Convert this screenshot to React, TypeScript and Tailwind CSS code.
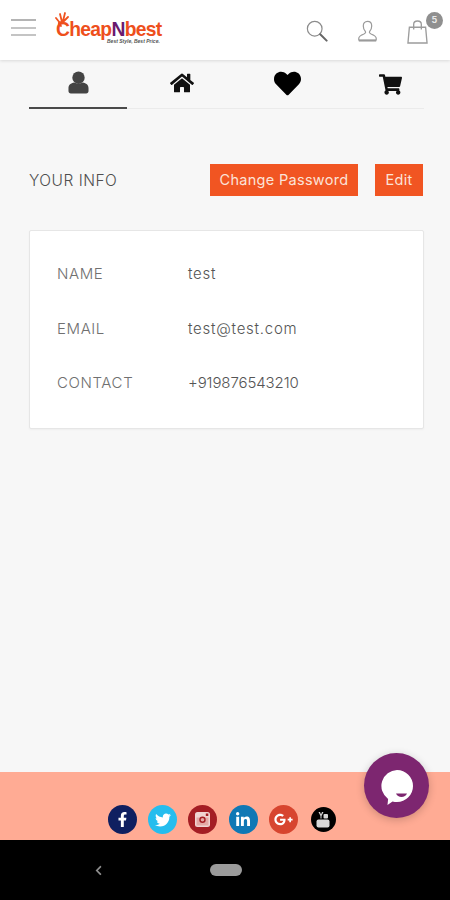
import React from "react";
import { FaFacebookF, FaTwitter, FaLinkedinIn, FaGooglePlusG, FaHome, FaHeart, FaShoppingCart, FaChevronLeft } from "react-icons/fa";

const font = { fontFamily: "Inter, 'Open Sans', sans-serif" };

function Row({ label, value, tight }: { label: string; value: string; tight?: boolean }) {
  return (
    <div className="flex h-[54.5px] items-center">
      <div className="w-[131px] text-[15px] font-light tracking-[0.6px] text-[#707070]">{label}</div>
      <div className={`text-[15px] font-light text-[#555] ${tight ? "tracking-[-0.1px]" : "tracking-[0.75px]"}`}>{value}</div>
    </div>
  );
}

function Social({ bg, children, small }: { bg: string; children: React.ReactNode; small?: boolean }) {
  return (
    <div className={`flex items-center justify-center rounded-full text-white ${small ? "h-[25px] w-[25px]" : "h-[29px] w-[29px]"}`} style={{ backgroundColor: bg }}>
      {children}
    </div>
  );
}

export default function App() {
  return (
    <div className="relative flex h-[900px] w-[450px] flex-col overflow-hidden bg-[#f7f7f7]" style={font}>
      <header className="flex h-[60px] shrink-0 items-center justify-between bg-white pl-[11px] pr-[22px] shadow-[0_1px_3px_rgba(0,0,0,0.12)]">
        <div className="flex items-center">
          <div className="mb-[5px] flex w-[25px] flex-col gap-[5.5px]">
            <div className="h-[2px] bg-[#b4b4b4]" />
            <div className="h-[2px] bg-[#c4c4c4]" />
            <div className="h-[2px] bg-[#c4c4c4]" />
          </div>
          <div className="relative ml-[19px] h-[36px] w-[110px]">
            <svg className="absolute left-0 top-0" width="14" height="16" viewBox="0 0 14 16" fill="none" stroke="#f0531f" strokeWidth="1.800" strokeLinecap="round">
              <path d="M1 6 L5 11 M5 2 L7 10 M10 1 L8 9 M13 5 L9 9 M6 14 C3 12 3 10 6 10" />
            </svg>
            <div className="absolute left-[1px] top-[10px] whitespace-nowrap text-[19.300px] font-bold leading-[16px] tracking-[-0.7px] text-[#ee4f1c]" style={{ fontFamily: "'Liberation Sans', sans-serif" }}>
              Cheap<span className="text-[#6a1a6e]">N</span>best
            </div>
            <div className="absolute left-[52px] top-[26px] whitespace-nowrap text-[5px] font-bold italic leading-[6px] text-[#555]" style={{ fontFamily: "'Liberation Sans', sans-serif" }}>
              Best Style, Best Price.
            </div>
          </div>
        </div>
        <div className="flex items-center">
          <svg width="22" height="22" viewBox="0 0 24 24" fill="none" className="mt-[1px]">
            <circle cx="9.500" cy="9.500" r="8" stroke="#8c8c8c" strokeWidth="1.300" />
            <path d="M15.500 15.500 L22.500 22.500" stroke="#666" strokeWidth="2.200" strokeLinecap="round" />
          </svg>
          <svg width="21" height="22" viewBox="0 0 22 24" fill="none" stroke="#9a9a9a" strokeWidth="1.300" className="ml-[29px] mt-[1px]">
            <path d="M11 1.500c3 0 4.600 2.200 4.600 5 0 2.600-1 4.700-2.300 6-.6 1 0 2 1.600 2.700 2.600 1 5.400 2.100 5.600 4.600v2H1.500v-2c.2-2.500 3-3.600 5.600-4.600 1.600-.7 2.200-1.700 1.600-2.700-1.300-1.300-2.300-3.400-2.300-6 0-2.800 1.600-5 4.600-5z" />
            <path d="M1.500 22.500h19" strokeWidth="2" />
          </svg>
          <div className="relative ml-[29px] mt-[3px] h-[24px] w-[21px]">
            <svg width="21" height="24" viewBox="0 0 22 25" fill="none" stroke="#9c9c9c" strokeWidth="1.400">
              <path d="M2.500 7.500h17l1.500 16.500H1z" />
              <path d="M7 10V4.500C7 2.500 8.800 1 11 1s4 1.500 4 3.500V10" />
            </svg>
            <div className="absolute left-[19px] top-[-8px] flex h-[17px] w-[17px] items-center justify-center rounded-full bg-[#8f8f8f] text-[9px] font-bold text-[#e8e8e8]">5</div>
          </div>
        </div>
      </header>

      <main className="flex-1 px-[29px]">
        <nav className="flex h-[49px] w-[395px] border-b border-[#ebebeb]">
          <div className="mb-[-1px] flex w-[98px] items-center justify-center border-b-2 border-[#4a4a4a]">
            <svg width="21" height="23" viewBox="0 0 22 24" fill="#444" className="mb-[2px]">
              <circle cx="11" cy="7" r="6.500" />
              <path d="M0.500 18c0-3.500 2.500-5.500 6-6 2.500 1.500 6.500 1.500 9 0 3.500.5 6 2.500 6 6v3c0 1.500-1 2.500-2.500 2.500H3c-1.500 0-2.500-1-2.500-2.500z" />
            </svg>
          </div>
          <div className="flex w-[110px] items-center justify-center">
            <FaHome size={24} className="mb-[2px] text-[#111]" />
          </div>
          <div className="flex w-[100px] items-center justify-center">
            <FaHeart size={27} className="mb-[2px] text-black" />
          </div>
          <div className="flex flex-1 items-center justify-center">
            <FaShoppingCart size={23} className="ml-[20px] text-[#111]" />
          </div>
        </nav>

        <section className="mt-[55px] flex w-[394px] items-center justify-between">
          <div className="pt-[1px] text-[15.500px] font-light tracking-[0.5px] text-[#4f4f4f]">YOUR INFO</div>
          <div className="flex gap-[17px]">
            <div className="flex h-[32px] w-[148px] items-center justify-center bg-[#f15522] text-[14.500px] tracking-[0.3px] text-[#fbe3d8]">Change Password</div>
            <div className="flex h-[32px] w-[48px] items-center justify-center bg-[#f15522] text-[14.500px] tracking-[0.3px] text-[#fbe3d8]">Edit</div>
          </div>
        </section>

        <section className="mt-[34px] h-[199px] w-[395px] rounded-[2px] border border-[#e6e6e6] bg-white pl-[27px] pt-[16px] shadow-[0_1px_2px_rgba(0,0,0,0.04)]">
          <Row label="NAME" value="test" />
          <Row label="EMAIL" value="test@test.com" />
          <Row label="CONTACT" value="+919876543210" tight />
        </section>
      </main>

      <footer className="flex h-[68px] shrink-0 items-end bg-[#ffab94] pb-[6px] pl-[108px]">
        <div className="flex items-center gap-[11.200px]">
          <Social bg="#0f1f60"><FaFacebookF size={15} /></Social>
          <Social bg="#26bdee"><FaTwitter size={16} /></Social>
          <Social bg="#a41e24">
            <svg width="15" height="15" viewBox="0 0 15 15">
              <rect width="15" height="15" rx="2.500" fill="#f0d4d2" />
              <rect x="1.500" y="5.500" width="12" height="8" fill="#e4a9a6" />
              <circle cx="7.500" cy="7.800" r="3.200" fill="#a41e24" />
              <circle cx="7.500" cy="7.800" r="1.800" fill="#e4a9a6" />
              <rect x="10.800" y="1.500" width="2.500" height="2.500" fill="#a41e24" />
            </svg>
          </Social>
          <Social bg="#0f78b5"><FaLinkedinIn size={16} /></Social>
          <Social bg="#d7452f"><FaGooglePlusG size={19} /></Social>
          <div className="ml-[2px]">
            <Social bg="#000000" small>
              <svg width="14" height="16" viewBox="0 0 14 16" fill="#d8d8d8">
                <path d="M2.500 0h1.500l1 2.500L6 0h1.500L5.500 4v2.500h-1V4z" />
                <rect x="7.500" y="2" width="4.500" height="4.500" rx="1" />
                <rect x="0.500" y="7.500" width="13" height="8" rx="2" />
              </svg>
            </Social>
          </div>
        </div>
      </footer>

      <div className="flex h-[60px] shrink-0 items-center bg-black">
        <FaChevronLeft size={11} className="ml-[93px] text-[#8e8e8e]" />
        <div className="ml-[106px] h-[12px] w-[32px] rounded-full bg-[#9b9b9b]" />
      </div>

      <div className="absolute left-[364px] top-[753px] flex h-[65px] w-[65px] items-center justify-center rounded-full bg-[#7d2670] shadow-[0_2px_8px_rgba(0,0,0,0.2)]">
        <svg width="32" height="35" viewBox="0 0 32 35" className="mt-[3px]">
          <path d="M16 0a16 16 0 0 1 0 32c-1.500 0-3-.2-4.500-.6L6.500 35l.6-6A16 16 0 0 1 16 0z" fill="#fff" />
          <path d="M15 23.500h11c-.8 2.200-3 3.500-5.500 3.500S15.800 25.700 15 23.500z" fill="#7d2670" />
        </svg>
      </div>
    </div>
  );
}
